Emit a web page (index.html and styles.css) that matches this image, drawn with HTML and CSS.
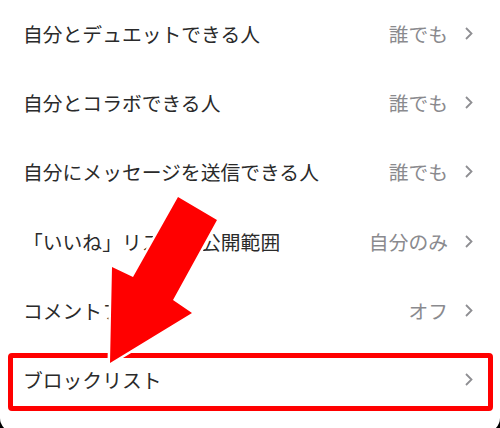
FILE: index.html
```html
<!DOCTYPE html>
<html lang="ja">
<head>
<meta charset="utf-8">
<link rel="stylesheet" href="styles.css">
</head>
<body>
<div class="panel">
  <ul class="list">
    <li class="row"><span class="label">自分とデュエットできる人</span><span class="value">誰でも</span><svg class="chev" viewBox="0 0 8 13"><path d="M1 1 L6.5 6.5 L1 12"/></svg></li>
    <li class="row"><span class="label">自分とコラボできる人</span><span class="value">誰でも</span><svg class="chev" viewBox="0 0 8 13"><path d="M1 1 L6.5 6.5 L1 12"/></svg></li>
    <li class="row"><span class="label">自分にメッセージを送信できる人</span><span class="value">誰でも</span><svg class="chev" viewBox="0 0 8 13"><path d="M1 1 L6.5 6.5 L1 12"/></svg></li>
    <li class="row"><span class="label">「いいね」リストの公開範囲</span><span class="value">自分のみ</span><svg class="chev" viewBox="0 0 8 13"><path d="M1 1 L6.5 6.5 L1 12"/></svg></li>
    <li class="row"><span class="label">コメントフィルター</span><span class="value">オフ</span><svg class="chev" viewBox="0 0 8 13"><path d="M1 1 L6.5 6.5 L1 12"/></svg></li>
    <li class="row"><span class="label">ブロックリスト</span><svg class="chev" viewBox="0 0 8 13"><path d="M1 1 L6.5 6.5 L1 12"/></svg></li>
  </ul>
  <div class="highlight"></div>
  <svg class="arrow" viewBox="0 0 500 428" width="500" height="428">
    <polygon points="170,298 203,300 203,324 186,322" fill="#ffffff"/>
    <polygon points="178,197 217,220 173,300 192,313 110,363 112,267 133,277" fill="#ff0000" stroke="#ffffff" stroke-width="5" stroke-linejoin="miter" paint-order="stroke"/>
  </svg>
</div>
</body>
</html>
```
FILE: styles.css
```css
html, body {
  margin: 0;
  padding: 0;
  background: #000;
}
.panel {
  position: relative;
  width: 500px;
  height: 432px;
  background: #fff;
  border-radius: 0 0 14px 14px;
  overflow: hidden;
  font-family: "Noto Sans CJK JP", "Noto Sans", sans-serif;
}
.list {
  list-style: none;
  margin: 0;
  padding: 0;
  transform: translateY(-1px);
}
.row {
  height: 69.2px;
  display: flex;
  align-items: center;
  padding: 0 27px 0 23px;
  font-size: 19.8px;
}
.label {
  flex: 1;
  color: #2a2a2a;
  white-space: nowrap;
}
.value {
  color: #8a8a8e;
  margin-right: 17px;
}
.chev {
  width: 8px;
  height: 13px;
  fill: none;
  stroke: #8e8e92;
  stroke-width: 1.8;
}
.highlight {
  position: absolute;
  left: 8px;
  top: 353px;
  width: 485px;
  height: 58px;
  box-sizing: border-box;
  border: 5px solid #ff0000;
  border-radius: 4px;
}
.arrow {
  position: absolute;
  left: 0;
  top: 0;
}
```
